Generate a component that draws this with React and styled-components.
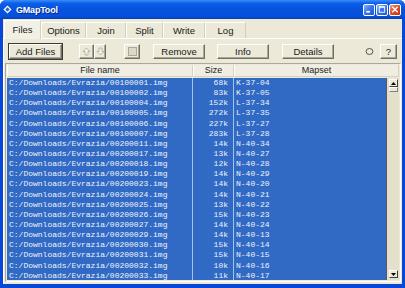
import React from "react"
import styled, { createGlobalStyle } from "styled-components"

const GlobalStyle = createGlobalStyle`
  html, body {
    margin: 0;
    padding: 0;
    background: #fff;
    overflow: hidden;
  }
  * { box-sizing: border-box; }
`

const rows = [
  ["00100001", "68k", "K-37-04"],
  ["00100002", "83k", "K-37-05"],
  ["00100004", "152k", "L-37-34"],
  ["00100005", "272k", "L-37-35"],
  ["00100006", "227k", "L-37-27"],
  ["00100007", "283k", "L-37-28"],
  ["00200011", "14k", "N-40-34"],
  ["00200017", "13k", "N-40-27"],
  ["00200018", "12k", "N-40-28"],
  ["00200019", "14k", "N-40-29"],
  ["00200023", "14k", "N-40-20"],
  ["00200024", "14k", "N-40-21"],
  ["00200025", "13k", "N-40-22"],
  ["00200026", "15k", "N-40-23"],
  ["00200027", "14k", "N-40-24"],
  ["00200029", "14k", "N-40-13"],
  ["00200030", "15k", "N-40-14"],
  ["00200031", "15k", "N-40-15"],
  ["00200032", "10k", "N-40-16"],
  ["00200033", "11k", "N-40-17"],
]

const tabs = ["Files", "Options", "Join", "Split", "Write", "Log"]
const tabWidths = [37, 45, 40, 37, 42, 41]

const App = () => {
  return (
    <>
      <GlobalStyle />
      <Window>
        <TitleBar>
          <TitleIcon viewBox="0 0 10 10">
            <path d="M5 0.5 L9.5 5 L5 9.5 L0.5 5 Z" fill="#fff" />
            <path d="M5 2.5 L7.5 5 L5 7.5 L2.5 5 Z" fill="#2a64d8" />
          </TitleIcon>
          <Title>GMapTool</Title>
          <Spacer />
          <CaptionBtn>
            <svg width="11" height="11" viewBox="0 0 11 11">
              <rect x="2.5" y="7" width="4" height="2" fill="#fff" />
            </svg>
          </CaptionBtn>
          <CaptionBtn>
            <svg width="11" height="11" viewBox="0 0 11 11">
              <rect x="2.5" y="2.5" width="6" height="6" fill="none" stroke="#fff" />
              <rect x="2.5" y="2" width="6" height="1.5" fill="#fff" />
            </svg>
          </CaptionBtn>
          <CaptionBtn close>
            <svg width="11" height="11" viewBox="0 0 11 11">
              <path d="M2.5 2.5 L8.5 8.5 M8.5 2.5 L2.5 8.5" stroke="#fff" strokeWidth="1.6" />
            </svg>
          </CaptionBtn>
        </TitleBar>
        <Client>
          <TabBar>
            {tabs.map((t, i) => (
              <Tab key={t} active={i === 0} style={{ width: tabWidths[i] }}>
                {t}
              </Tab>
            ))}
          </TabBar>
          <Panel>
            <Toolbar>
              <Button default w={53}>Add Files</Button>
              <ArrowGroup>
                <Button w={15}>
                  <svg width="9" height="9" viewBox="0 0 9 9">
                    <path d="M4.5 1 L8 4.5 L6 4.5 L6 8 L3 8 L3 4.5 L1 4.5 Z" fill="#f4f2ea" stroke="#aca899" strokeWidth="0.8" />
                  </svg>
                </Button>
                <Button w={12}>
                  <svg width="9" height="9" viewBox="0 0 9 9">
                    <path d="M4.5 8 L8 4.5 L6 4.5 L6 1 L3 1 L3 4.5 L1 4.5 Z" fill="#f4f2ea" stroke="#aca899" strokeWidth="0.8" />
                  </svg>
                </Button>
              </ArrowGroup>
              <Button w={16} ml={18}>
                <SquareMark />
              </Button>
              <Button w={52} ml={13}>Remove</Button>
              <Button w={52} ml={12}>Info</Button>
              <Button w={52} ml={13}>Details</Button>
              <Spacer />
              <svg width="9" height="9" viewBox="0 0 9 9" style={{ marginRight: 6 }}>
                <ellipse cx="4.5" cy="4.5" rx="3.4" ry="3" fill="none" stroke="#555" strokeWidth="1" />
              </svg>
              <Button w={17}>?</Button>
            </Toolbar>
            <ListFrame>
              <Header>
                <HeadCell>File name</HeadCell>
                <HeadCell>Size</HeadCell>
                <HeadCell>Mapset</HeadCell>
              </Header>
              <BodyWrap>
                <Body>
                  {rows.map(([f, s, m]) => (
                    <Row key={f}>
                      <Cell>C:/Downloads/Evrazia/{f}.img</Cell>
                      <Cell right>{s}</Cell>
                      <Cell>{m}</Cell>
                    </Row>
                  ))}
                </Body>
                <ScrollBar>
                  <ScrollBtn>
                    <svg width="5" height="3" viewBox="0 0 5 3"><path d="M2.5 0 L5 3 L0 3 Z" fill="#000" /></svg>
                  </ScrollBtn>
                  <Thumb />
                  <Spacer />
                  <ScrollBtn>
                    <svg width="5" height="3" viewBox="0 0 5 3"><path d="M0 0 L5 0 L2.5 3 Z" fill="#000" /></svg>
                  </ScrollBtn>
                </ScrollBar>
              </BodyWrap>
            </ListFrame>
          </Panel>
        </Client>
      </Window>
    </>
  )
}

export default App

const Window = styled.div`
  width: 405px;
  height: 288px;
  background: #0848d8;
  border-radius: 6px 6px 0 0;
  display: flex;
  flex-direction: column;
  overflow: hidden;
  font-family: "Liberation Sans", Arial, sans-serif;
`

const TitleBar = styled.div`
  height: 19px;
  flex: none;
  display: flex;
  align-items: center;
  padding: 0 4px 0 3px;
  background: linear-gradient(180deg, #3c8cf8 0%, #0a5ee8 18%, #0653de 50%, #0650dc 85%, #0442b8 100%);
`

const TitleIcon = styled.svg`
  width: 9px;
  height: 9px;
  margin-right: 4px;
`

const Title = styled.span`
  color: #fff;
  font-weight: bold;
  font-size: 9px;
  letter-spacing: -0.2px;
  text-shadow: 1px 1px 0 #0a2a80;
`

const Spacer = styled.div`
  flex: 1;
`

const CaptionBtn = styled.div`
  width: 12px;
  height: 12px;
  margin-left: 1px;
  border: 1px solid #fff;
  border-radius: 2px;
  display: flex;
  align-items: center;
  justify-content: center;
  background: ${({ close }) =>
    close
      ? "linear-gradient(135deg, #f0a080 0%, #e0502a 45%, #c83010 100%)"
      : "linear-gradient(135deg, #8cb4f8 0%, #3a78f0 45%, #1c54d8 100%)"};
  svg { display: block; }
`

const Client = styled.div`
  flex: 1;
  margin: 0 3px 4px 3px;
  background: #ece9d8;
  display: flex;
  flex-direction: column;
  min-height: 0;
`

const TabBar = styled.div`
  height: 19px;
  flex: none;
  display: flex;
  align-items: flex-end;
  padding-left: 1px;
`

const Tab = styled.div`
  height: ${({ active }) => (active ? "19px" : "16px")};
  display: flex;
  align-items: center;
  justify-content: center;
  font-size: 9.5px;
  color: #1a1a1a;
  background: ${({ active }) => (active ? "#f2f0e4" : "#ece9d8")};
  border-left: 1px solid #fff;
  border-right: 1px solid #d2cfc0;
  border-top: 1px solid #fff;
  padding-bottom: ${({ active }) => (active ? "2px" : "0")};
  margin-bottom: ${({ active }) => (active ? "-1px" : "0")};
  position: relative;
  z-index: ${({ active }) => (active ? 1 : 0)};
`

const Panel = styled.div`
  flex: 1;
  min-height: 0;
  display: flex;
  flex-direction: column;
  border-top: 1px solid #fff;
  border-left: 1px solid #fff;
  padding: 4px 1px 1px 1px;
`

const Toolbar = styled.div`
  height: 16px;
  display: flex;
  align-items: center;
  padding: 0 4px 0 4px;
  margin-bottom: 4px;
`

const Button = styled.div`
  width: ${({ w }) => w}px;
  margin-left: ${({ ml }) => ml || 0}px;
  height: 15px;
  flex: none;
  display: flex;
  align-items: center;
  justify-content: center;
  font-size: 9.5px;
  color: #1a1a1a;
  background: #ece9d8;
  border-top: 1px solid #fff;
  border-left: 1px solid #fff;
  border-right: 1px solid #716f64;
  border-bottom: 1px solid #716f64;
  box-shadow: ${({ default: d }) =>
    d ? "0 0 0 1px #3a3a3a, inset -1px -1px 0 #aca899" : "inset -1px -1px 0 #aca899"};
  svg { display: block; }
`

const ArrowGroup = styled.div`
  display: flex;
  margin-left: 17px;
`

const SquareMark = styled.div`
  width: 9px;
  height: 9px;
  background: #ddd8c4;
  border: 1px solid #aca899;
`

const ListFrame = styled.div`
  flex: 1;
  min-height: 0;
  display: flex;
  flex-direction: column;
  border-top: 1px solid #aca899;
  border-left: 1px solid #aca899;
  border-right: 1px solid #fff;
  border-bottom: 1px solid #fff;
  margin: 0 0 1px 0;
  padding: 1px;
`

const Header = styled.div`
  display: grid;
  grid-template-columns: 186px 41px 1fr;
  height: 12px;
  flex: none;
`

const HeadCell = styled.div`
  font-size: 9px;
  color: #222;
  text-align: center;
  line-height: 11px;
  background: #f0eee2;
  border-right: 1px solid #d6d2c2;
  border-bottom: 1px solid #d6d2c2;
  border-left: 1px solid #fff;
`

const BodyWrap = styled.div`
  flex: 1;
  min-height: 0;
  display: flex;
  padding-top: 1px;
`

const Body = styled.div`
  flex: 1;
  background: #316ac5;
  border-right: 1px solid #5a5a5a;
  padding-top: 0;
  overflow: hidden;
`

const Row = styled.div`
  display: grid;
  grid-template-columns: 186px 41px 1fr;
  height: 10.15px;
`

const Cell = styled.div`
  font-family: "Liberation Mono", "Courier New", monospace;
  font-size: 8px;
  line-height: 10px;
  color: #f0f2f8;
  text-align: ${({ right }) => (right ? "right" : "left")};
  padding: ${({ right }) => (right ? "0 5px 0 0" : "0 0 0 2px")};
  border-right: 1px solid #a8c0e8;
  white-space: nowrap;
  &:last-child { border-right: none; }
`

const ScrollBar = styled.div`
  width: 12px;
  display: flex;
  flex-direction: column;
  padding: 1px 1px 2px 2px;
  background: #e4e0cc;
`

const ScrollBtn = styled.div`
  width: 9px;
  height: 8px;
  display: flex;
  align-items: center;
  justify-content: center;
  background: #ece9d8;
  border-top: 1px solid #fff;
  border-left: 1px solid #fff;
  border-right: 1px solid #404040;
  border-bottom: 1px solid #404040;
`

const Thumb = styled.div`
  width: 9px;
  height: 5px;
  background: #ece9d8;
  border-top: 1px solid #fff;
  border-left: 1px solid #fff;
  border-right: 1px solid #808080;
  border-bottom: 1px solid #808080;
`
